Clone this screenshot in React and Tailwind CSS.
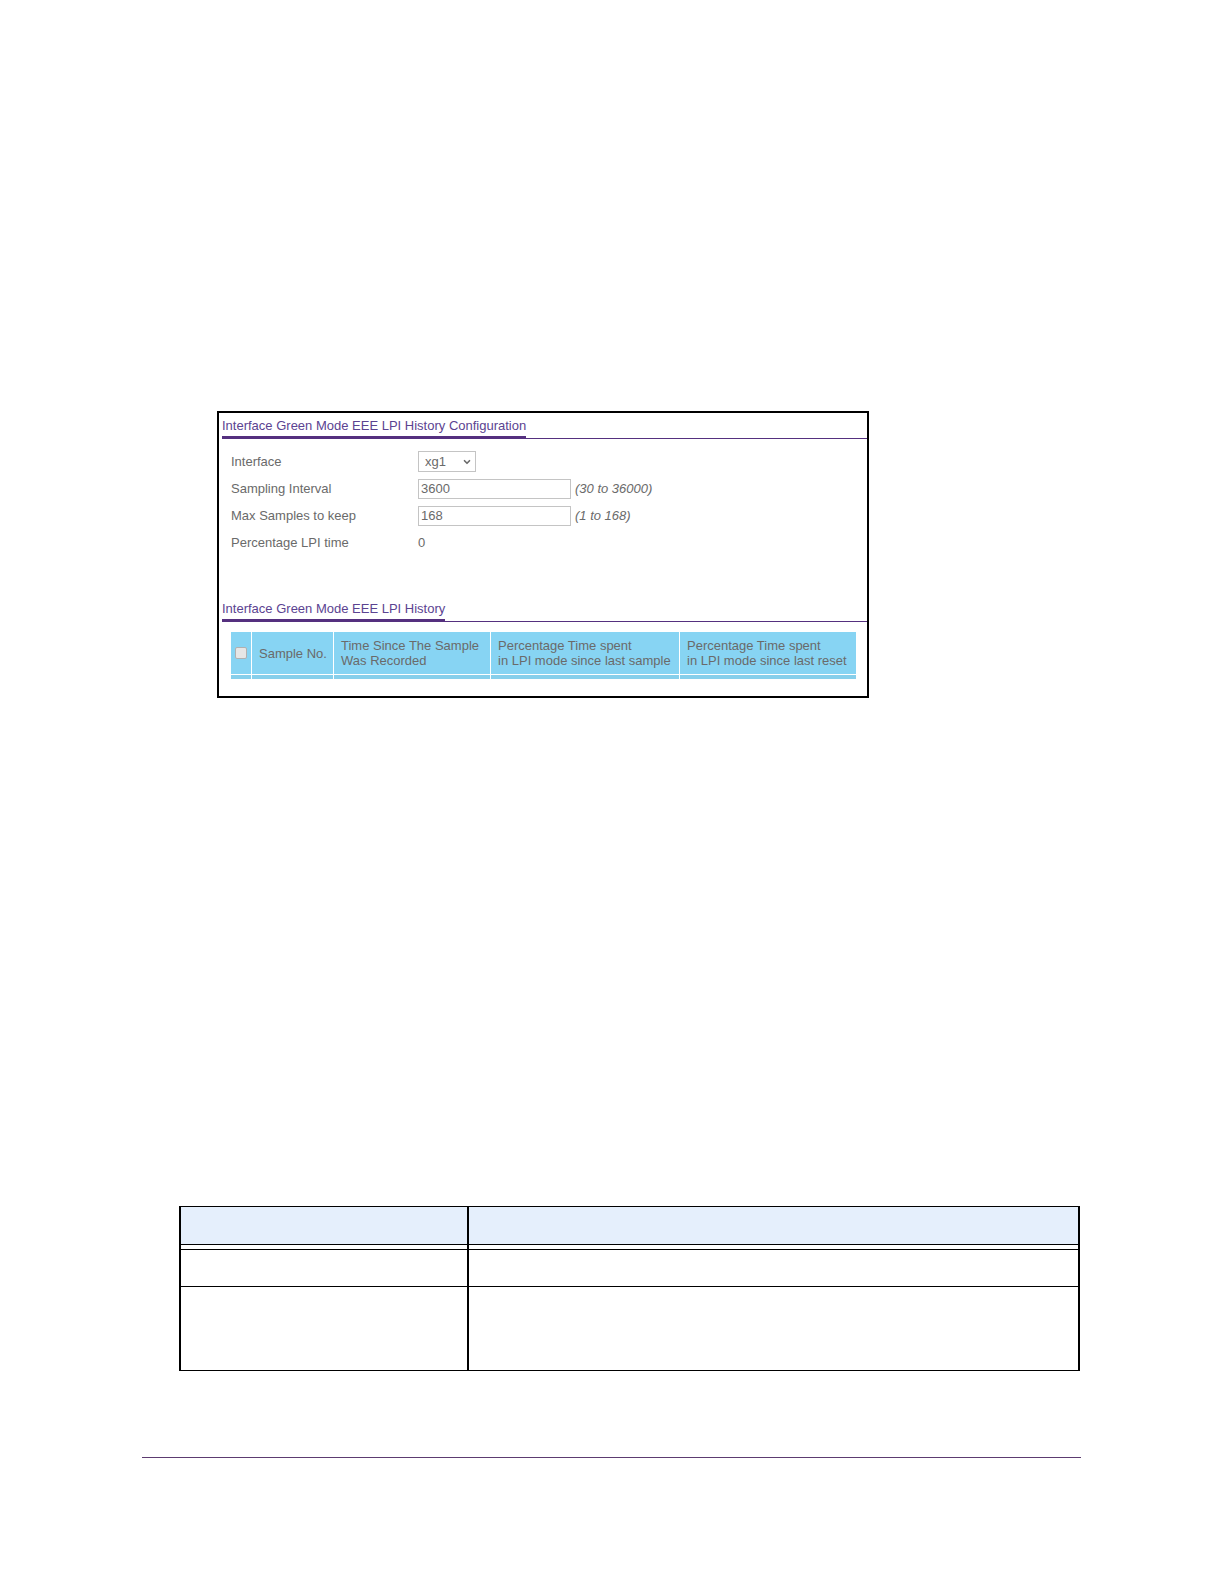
import React, { useState } from 'react';
import { ChevronDown } from 'lucide-react';

const historyColumns = [
    { lines: ['Sample No.'], width: 'w-[82px]' },
    { lines: ['Time Since The Sample', 'Was Recorded'], width: 'w-[157px]' },
    { lines: ['Percentage Time spent', 'in LPI mode since last sample'], width: 'w-[189px]' },
    { lines: ['Percentage Time spent', 'in LPI mode since last reset'], width: '' },
];

const SectionTitle = ({ children }) => (
    <div className="relative flex ml-[3px] h-[26px]">
        <div className="absolute inset-x-0 bottom-0 h-px bg-[#55307f]" />
        <h2 className="relative leading-[18px] pt-1 border-b-3 border-[#55307f] text-[#5b4391]">{children}</h2>
    </div>
);

const Field = ({ id, label, hint, children }) => (
    <div className="flex items-center h-[27px]">
        <label htmlFor={id} className="w-[187px] shrink-0">{label}</label>
        {children}
        {hint && <em className="ml-1">{hint}</em>}
    </div>
);

const HistoryPanel = () => {
    const [iface, setIface] = useState('xg1');
    const [interval, setSamplingInterval] = useState('3600');
    const [maxSamples, setMaxSamples] = useState('168');
    const [checked, setChecked] = useState(false);

    return (
        <section className="w-full max-w-[652px] border-2 border-black pb-[17px] text-[13px] leading-[15px] text-[#6a6a6a]">
            <SectionTitle>Interface Green Mode EEE LPI History Configuration</SectionTitle>

            <form className="pl-3 pt-[9px]" onSubmit={(e) => e.preventDefault()}>
                <Field id="iface" label="Interface">
                    <div className="relative">
                        <select
                            id="iface"
                            value={iface}
                            onChange={(e) => setIface(e.target.value)}
                            className="block appearance-none w-[58px] h-[21px] pl-[6px] border border-[#c4c4c4] bg-white"
                        >
                            <option value="xg1">xg1</option>
                        </select>
                        <ChevronDown size={10} strokeWidth={4} className="absolute right-1 top-[6px] pointer-events-none" />
                    </div>
                </Field>
                <Field id="interval" label="Sampling Interval" hint="(30 to 36000)">
                    <input
                        id="interval"
                        value={interval}
                        onChange={(e) => setSamplingInterval(e.target.value)}
                        className="w-[153px] h-5 px-[2px] border border-[#c4c4c4] bg-white"
                    />
                </Field>
                <Field id="max-samples" label="Max Samples to keep" hint="(1 to 168)">
                    <input
                        id="max-samples"
                        value={maxSamples}
                        onChange={(e) => setMaxSamples(e.target.value)}
                        className="w-[153px] h-5 px-[2px] border border-[#c4c4c4] bg-white"
                    />
                </Field>
                <Field id="lpi-time" label="Percentage LPI time">
                    <output id="lpi-time">0</output>
                </Field>
            </form>

            <div className="pt-10">
                <SectionTitle>Interface Green Mode EEE LPI History</SectionTitle>
            </div>

            <div className="pl-3 pr-[11px] pt-[10px]">
                <table className="w-full table-fixed border-separate border-spacing-0">
                    <thead>
                        <tr className="h-[43px] bg-[#87d4f3]">
                            <th className="w-[21px] p-0 border-r border-b border-white">
                                <input
                                    type="checkbox"
                                    aria-label="Select all samples"
                                    checked={checked}
                                    onChange={(e) => setChecked(e.target.checked)}
                                    className="block mx-auto size-3 appearance-none rounded-xs border border-[#b0b0b0] bg-[#e6e6e6] checked:bg-[#55307f]"
                                />
                            </th>
                            {historyColumns.map((col, i) => (
                                <th key={i} className={`${col.width} p-0 pl-[7px] border-r border-b border-white last:border-r-0 text-left font-normal whitespace-nowrap`}>
                                    {col.lines.map((line) => (
                                        <div key={line}>{line}</div>
                                    ))}
                                </th>
                            ))}
                        </tr>
                    </thead>
                    <tbody>
                        <tr className="h-1 bg-[#87cfeb]">
                            <td className="p-0 border-r border-white" />
                            {historyColumns.map((col, i) => (
                                <td key={i} className="p-0 border-r border-white last:border-r-0" />
                            ))}
                        </tr>
                    </tbody>
                </table>
            </div>
        </section>
    );
};

// Two column table with a double rule under its header
const FieldTable = () => (
    <table className="w-full table-fixed border-separate border-spacing-0 border-x-2 border-black">
        <tbody>
            <tr className="h-[39px] bg-[#e5effc]">
                <td className="w-[288px] border-y border-r-2 border-black" />
                <td className="border-y border-black" />
            </tr>
            <tr className="h-[5px]">
                <td className="p-0 border-b border-r-2 border-black" />
                <td className="p-0 border-b border-black" />
            </tr>
            <tr className="h-[37px]">
                <td className="border-b border-r-2 border-black" />
                <td className="border-b border-black" />
            </tr>
            <tr className="h-[84px]">
                <td className="border-b border-r-2 border-black" />
                <td className="border-b border-black" />
            </tr>
        </tbody>
    </table>
);

const App = () => {
    return (
        <div className="min-h-screen bg-white pl-[142px] pr-[143px] pt-[411px] pb-[126px] font-['Liberation_Sans',Arial,sans-serif]">
            <main>
                <div className="pl-[75px]">
                    <HistoryPanel />
                </div>
                <div className="pl-[37px] pr-px pt-[508px]">
                    <FieldTable />
                </div>
            </main>
            <hr className="mt-[86px] border-t border-[#5c3b70]" />
        </div>
    );
};

export default App;
